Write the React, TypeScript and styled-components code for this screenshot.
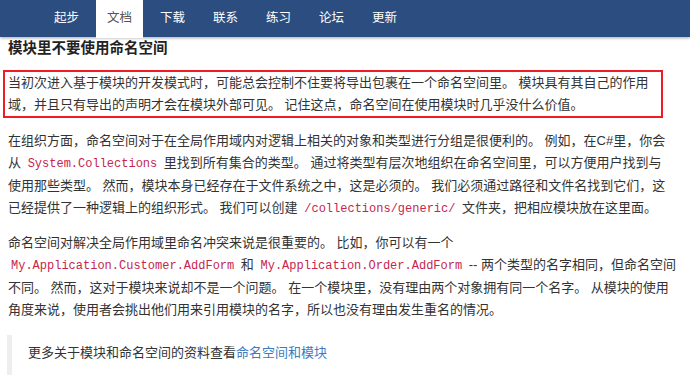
import React from "react";
import styled, { createGlobalStyle } from "styled-components";

const GlobalStyle = createGlobalStyle`
  html, body {
    margin: 0;
    padding: 0;
    background: #fff;
    overflow: hidden;
  }
  body {
    font-family: "Liberation Sans", "Noto Sans CJK SC", sans-serif;
    color: #333;
  }
`;

const Page = styled.div`
  width: 690px;
  height: 375px;
  overflow: hidden;
`;

const NavBar = styled.nav`
  height: 37px;
  background: #2b4d7f;
  box-shadow: 0 1px 3px rgba(0, 0, 0, 0.35);
  position: relative;
  z-index: 1;
`;

const NavList = styled.ul`
  display: flex;
  margin: 0;
  padding: 0 0 0 40px;
  list-style: none;
  height: 100%;
`;

const NavItem = styled.li<{ $active?: boolean }>`
  margin: 0 3px;
  padding: 0 11px;
  height: ${(p) => (p.$active ? "38px" : "37px")};
  line-height: 37px;
  font-size: 12.5px;
  color: ${(p) => (p.$active ? "#555" : "#fff")};
  background: ${(p) => (p.$active ? "#fff" : "transparent")};
`;

const Content = styled.main`
  padding: 0 10px 0 8px;
  font-size: 13px;
  line-height: 22px;
`;

const Title = styled.h2`
  margin: 0 0 11px;
  font-size: 14.5px;
  line-height: 22px;
  font-weight: bold;
  color: #222;
`;

const Para = styled.p<{ $marked?: boolean }>`
  margin: 0 0 12px;
  ${(p) =>
    p.$marked &&
    `
    border: 2px solid #f01c24;
    margin: 0 17px 12px -5px;
    padding: 0 3px;
  `}
`;

const Code = styled.code`
  font-family: "Liberation Mono", "DejaVu Sans Mono", monospace;
  font-size: 12px;
  color: #c7254e;
  padding: 0 3px;
`;

const Quote = styled.blockquote`
  margin: 14px 0 0 -1px;
  padding: 7px 16px 14px;
  border-left: 5px solid #eee;
`;

const Link = styled.a`
  color: #3a7bc2;
  text-decoration: none;
`;

const tabs = ["起步", "文档", "下载", "联系", "练习", "论坛", "更新"];

export default function App() {
  return (
    <Page>
      <GlobalStyle />
      <NavBar>
        <NavList>
          {tabs.map((t) => (
            <NavItem key={t} $active={t === "文档"}>
              {t}
            </NavItem>
          ))}
        </NavList>
      </NavBar>
      <Content>
        <Title>模块里不要使用命名空间</Title>
        <Para $marked>
          当初次进入基于模块的开发模式时，可能总会控制不住要将导出包裹在一个命名空间里。
          模块具有其自己的作用域，并且只有导出的声明才会在模块外部可见。
          记住这点，命名空间在使用模块时几乎没什么价值。
        </Para>
        <Para>
          在组织方面，命名空间对于在全局作用域内对逻辑上相关的对象和类型进行分组是很便利的。
          例如，在C#里，你会
          <br />从 <Code>System.Collections</Code> 里找到所有集合的类型。
          通过将类型有层次地组织在命名空间里，可以方便用户找到与
          <br />
          使用那些类型。 然而，模块本身已经存在于文件系统之中，这是必须的。
          我们必须通过路径和文件名找到它们，这
          <br />
          已经提供了一种逻辑上的组织形式。 我们可以创建{" "}
          <Code>/collections/generic/</Code> 文件夹，把相应模块放在这里面。
        </Para>
        <Para>
          命名空间对解决全局作用域里命名冲突来说是很重要的。 比如，你可以有一个
          <br />
          <Code>My.Application.Customer.AddForm</Code> 和{" "}
          <Code>My.Application.Order.AddForm</Code> --
          两个类型的名字相同，但命名空间
          <br />
          不同。 然而，这对于模块来说却不是一个问题。
          在一个模块里，没有理由两个对象拥有同一个名字。 从模块的使用
          <br />
          角度来说，使用者会挑出他们用来引用模块的名字，所以也没有理由发生重名的情况。
        </Para>
        <Quote>
          更多关于模块和命名空间的资料查看<Link href="#">命名空间和模块</Link>
        </Quote>
      </Content>
    </Page>
  );
}
